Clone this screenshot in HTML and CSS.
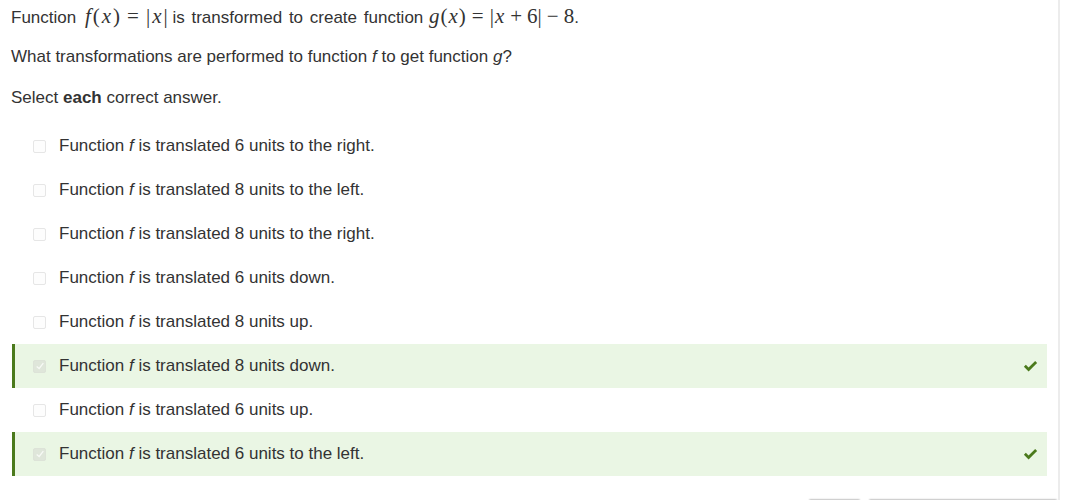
FILE: index.html
```html
<!DOCTYPE html>
<html>
<head>
<meta charset="utf-8">
<link rel="stylesheet" href="styles.css">
</head>
<body>
<div class="page">
  <div class="question">
    <p class="line">Function <span class="math first"><i>f</i>(<i>x</i>)<span class="rel">=</span>|<i>x</i>|</span> <span class="spaced">is transformed to create function</span> <span class="math"><i>g</i>(<i>x</i>)<span class="rel">=</span>|<i>x</i><span class="bin">+</span>6|<span class="bin">−</span>8</span>.</p>
    <p class="line">What transformations are performed to function <i>f</i> to get function <i>g</i>?</p>
    <p class="line">Select <b>each</b> correct answer.</p>
  </div>
  <ul class="options">
    <li class="opt"><span class="box"></span><span class="label">Function <i>f</i> is translated 6 units to the right.</span></li>
    <li class="opt"><span class="box"></span><span class="label">Function <i>f</i> is translated 8 units to the left.</span></li>
    <li class="opt"><span class="box"></span><span class="label">Function <i>f</i> is translated 8 units to the right.</span></li>
    <li class="opt"><span class="box"></span><span class="label">Function <i>f</i> is translated 6 units down.</span></li>
    <li class="opt"><span class="box"></span><span class="label">Function <i>f</i> is translated 8 units up.</span></li>
    <li class="opt correct"><span class="box checked"><svg viewBox="0 0 12 12" width="10" height="10"><path d="M2 6.5 L5 9 L10 2.5" fill="none" stroke="#f7f9f5" stroke-width="1.6"/></svg></span><span class="label">Function <i>f</i> is translated 8 units down.</span><svg class="tick" viewBox="0 0 16 12" width="15" height="11"><path d="M0.8 6.3 L2.9 4.2 L5.9 7.2 L13.1 0 L15.2 2.1 L5.9 11.4 Z" fill="#4b7a1c"/></svg></li>
    <li class="opt"><span class="box"></span><span class="label">Function <i>f</i> is translated 6 units up.</span></li>
    <li class="opt correct"><span class="box checked"><svg viewBox="0 0 12 12" width="10" height="10"><path d="M2 6.5 L5 9 L10 2.5" fill="none" stroke="#f7f9f5" stroke-width="1.6"/></svg></span><span class="label">Function <i>f</i> is translated 6 units to the left.</span><svg class="tick" viewBox="0 0 16 12" width="15" height="11"><path d="M0.8 6.3 L2.9 4.2 L5.9 7.2 L13.1 0 L15.2 2.1 L5.9 11.4 Z" fill="#4b7a1c"/></svg></li>
  </ul>
  <div class="footer">
    <div class="btn small"></div>
    <div class="btn large"></div>
  </div>
</div>
</body>
</html>
```

FILE: styles.css
```css
html, body {
  margin: 0;
  padding: 0;
  background: #fff;
}
body {
  font-family: "Liberation Sans", Arial, sans-serif;
  font-size: 17px;
  color: #333;
  height: 500px;
  overflow: hidden;
}
.page {
  width: 1060px;
  min-height: 500px;
  border-right: 2px solid #ececec;
  box-sizing: border-box;
}
.question {
  padding: 6px 0 0 11px;
}
.line {
  margin: 0 0 21px 0;
  height: 20px;
  line-height: 20px;
  white-space: nowrap;
}
.spaced {
  word-spacing: 2px;
}
.math {
  font-family: "Liberation Serif", "Times New Roman", serif;
  font-size: 21px;
}
.math.first {
  margin-left: 2px;
}
.math i {
  font-style: italic;
  padding: 0 1px;
}
.math.first i {
  padding: 0 2px;
}
.rel {
  margin: 0 6px;
}
.math.first .rel {
  margin: 0 7px;
}
.bin {
  margin: 0 5px;
}
.options {
  list-style: none;
  margin: 0;
  padding: 0;
  margin-left: 12px;
  width: 1035px;
  margin-top: -5px;
}
.opt {
  height: 44px;
  display: flex;
  align-items: center;
  border-left: 3px solid transparent;
  padding-left: 18px;
  box-sizing: border-box;
}
.opt.correct {
  background: #eaf6e4;
  border-left-color: #4b7a1c;
}
.box {
  width: 11px;
  height: 11px;
  border: 1px solid #e6e6e6;
  border-radius: 2px;
  background: #fdfdfd;
  display: flex;
  align-items: center;
  justify-content: center;
  flex: none;
}
.box.checked {
  background: #dfe6da;
  border-color: #dde3d8;
}
.label {
  margin-left: 13px;
  flex: 1;
}
.tick {
  margin-right: 9px;
  flex: none;
}
.footer {
  display: flex;
  margin-top: 23px;
  padding-left: 808px;
  gap: 7px;
}
.btn {
  height: 20px;
  border: 1px solid #d0d0d0;
  border-radius: 3px;
  box-shadow: 0 -1px 1px rgba(0,0,0,0.05);
  background: #fff;
}
.btn.small {
  width: 52px;
}
.btn.large {
  width: 190px;
}
```
